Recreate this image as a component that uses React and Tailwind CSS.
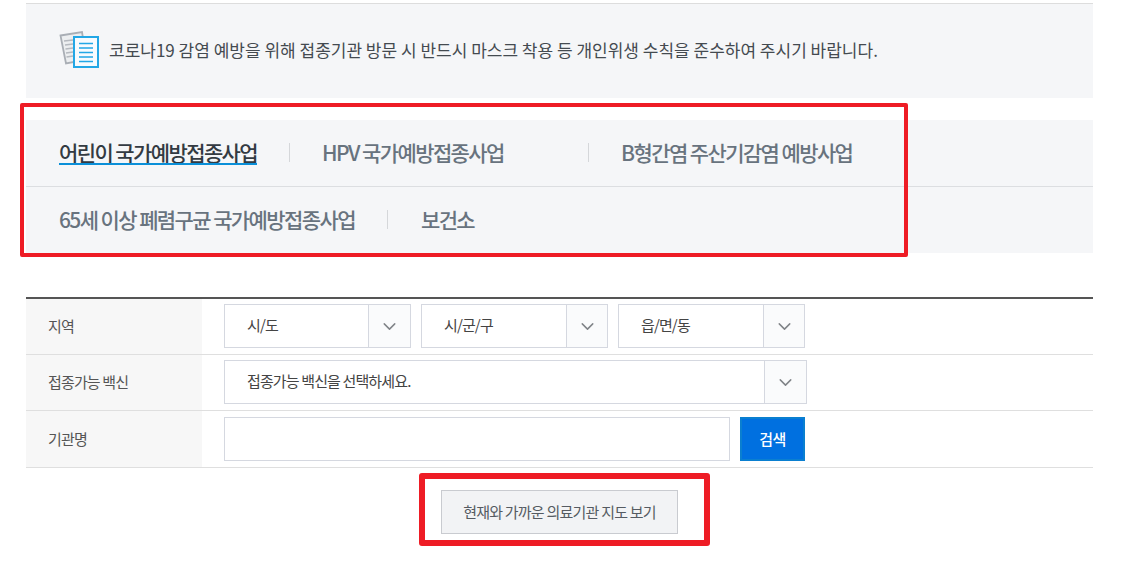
import { ChevronDown } from 'lucide-react';

const font = { fontFamily: '"Noto Sans CJK KR", "Noto Sans", sans-serif' };

function NoticeIcon() {
  return (
    <svg width="40" height="38" viewBox="0 0 40 38" className="shrink-0 -mt-[2px]">
      <path d="M1.5 5.5 L23 2 L24 8 L15 8 L15 32 L7 33.5 Z" fill="#eceef0" stroke="#a9aeb5" strokeWidth="1.8" />
      <path d="M5 11 L14 10 M6 15 L14 14 M6.5 19 L14 18 M7 23 L14 22 M7.5 27 L14 26" stroke="#b5b9bf" strokeWidth="1.4" />
      <rect x="15" y="7" width="24" height="30" fill="#f7fbfe" stroke="#22a7e6" strokeWidth="2" />
      <path d="M20 13.5 H34 M20 18 H34 M20 22.5 H34 M20 27 H34 M20 31.5 H34" stroke="#22a7e6" strokeWidth="1.6" />
    </svg>
  );
}

function Tab({ children, active, className = '' }) {
  return (
    <span className={`relative text-[21px] leading-[28px] font-medium tracking-[-1.6px] whitespace-nowrap ${active ? 'text-[#333a42]' : 'text-[#68737e]'} ${className}`}>
      {children}
      {active && <span className="absolute left-0 right-0 top-[25px] h-[2px] bg-[#0a8fd8]" />}
    </span>
  );
}

function Select({ label, className, textWidth }) {
  return (
    <div className={`flex h-[44px] border border-[#d5d8e0] bg-white ${className}`}>
      <div className={`${textWidth} pl-[22px] text-[15px] leading-[39px] text-[#444] tracking-[-0.87px] whitespace-nowrap`}>{label}</div>
      <div className="flex-1 flex items-center justify-center border-l border-[#d5d8e0] bg-[#fafbfc]">
        <ChevronDown size={21} strokeWidth={1.7} className="text-[#808488]" />
      </div>
    </div>
  );
}

function Row({ label, height, children }) {
  return (
    <div className={`flex border-b border-[#dfdfdf] ${height}`}>
      <div className="w-[176px] shrink-0 bg-[#f7f7f7] pl-[22px] flex items-center text-[15px] text-[#555] tracking-[-0.85px]">{label}</div>
      <div className="flex-1 pl-[22px] pt-[5px] flex gap-[10px]">{children}</div>
    </div>
  );
}

export default function App() {
  return (
    <div className="relative w-[1142px] h-[567px] overflow-hidden bg-white" style={font}>
      <div className="ml-[26px] w-[1067px] pt-[3px]">
        <div className="h-[95px] border-t border-[#dddddd] bg-[#f5f6f8] pl-[33px] pb-[2px] flex items-center gap-[10px]">
          <NoticeIcon />
          <p className="text-[17px] text-[#444a50] whitespace-nowrap">
            코로나19 감염 예방을 위해 접종기관 방문 시 반드시 마스크 착용 등 개인위생 수칙을 준수하여 주시기 바랍니다.
          </p>
        </div>

        <div className="mt-[22px] h-[133px] bg-[#f5f6f8]">
          <div className="h-[67px] pb-[2px] border-b border-[#dcdee1] flex items-center pl-[33px]">
            <Tab active>어린이 국가예방접종사업</Tab>
            <span className="w-px h-[19px] bg-[#d5d7da] ml-[32px] mr-[32px]" />
            <Tab className="w-[266px]">HPV 국가예방접종사업</Tab>
            <span className="w-px h-[19px] bg-[#d5d7da] mr-[32px]" />
            <Tab>B형간염 주산기감염 예방사업</Tab>
          </div>
          <div className="h-[66px] pb-[2px] flex items-center pl-[33px]">
            <Tab>65세 이상 폐렴구균 국가예방접종사업</Tab>
            <span className="w-px h-[19px] bg-[#d5d7da] ml-[32px] mr-[33px]" />
            <Tab>보건소</Tab>
          </div>
        </div>

        <div className="mt-[44px] border-t-2 border-[#555555]">
          <Row label="지역" height="h-[56px]">
            <Select label="시/도" className="w-[187px]" textWidth="w-[143px]" />
            <Select label="시/군/구" className="w-[187px]" textWidth="w-[144px]" />
            <Select label="읍/면/동" className="w-[187px]" textWidth="w-[144px]" />
          </Row>
          <Row label="접종가능 백신" height="h-[56px]">
            <Select label="접종가능 백신을 선택하세요." className="w-[583px]" textWidth="w-[539px]" />
          </Row>
          <Row label="기관명" height="h-[57px]">
            <div className="mt-[1px] w-[506px] h-[44px] border border-[#d5d8e0] bg-white" />
            <button className="mt-[1px] w-[65px] h-[44px] border-2 border-[#0a7fd0] bg-[#0070e0] text-white text-[15px] font-medium tracking-[-0.5px]">검색</button>
          </Row>
        </div>

        <div className="mt-[22px] flex justify-center">
          <button className="w-[237px] h-[44px] border border-[#c9cbd0] bg-[#f2f3f5] text-[15px] text-[#555b62] tracking-[-0.78px]">
            현재와 가까운 의료기관 지도 보기
          </button>
        </div>
      </div>

      <div className="absolute left-[20px] top-[103px] w-[888px] h-[154px] border-[4px] border-[#ee1c25] rounded-[2px]" />
      <div className="absolute left-[419px] top-[473px] w-[291px] h-[73px] border-[6px] border-[#ee1c25] rounded-[3px]" />
    </div>
  );
}
